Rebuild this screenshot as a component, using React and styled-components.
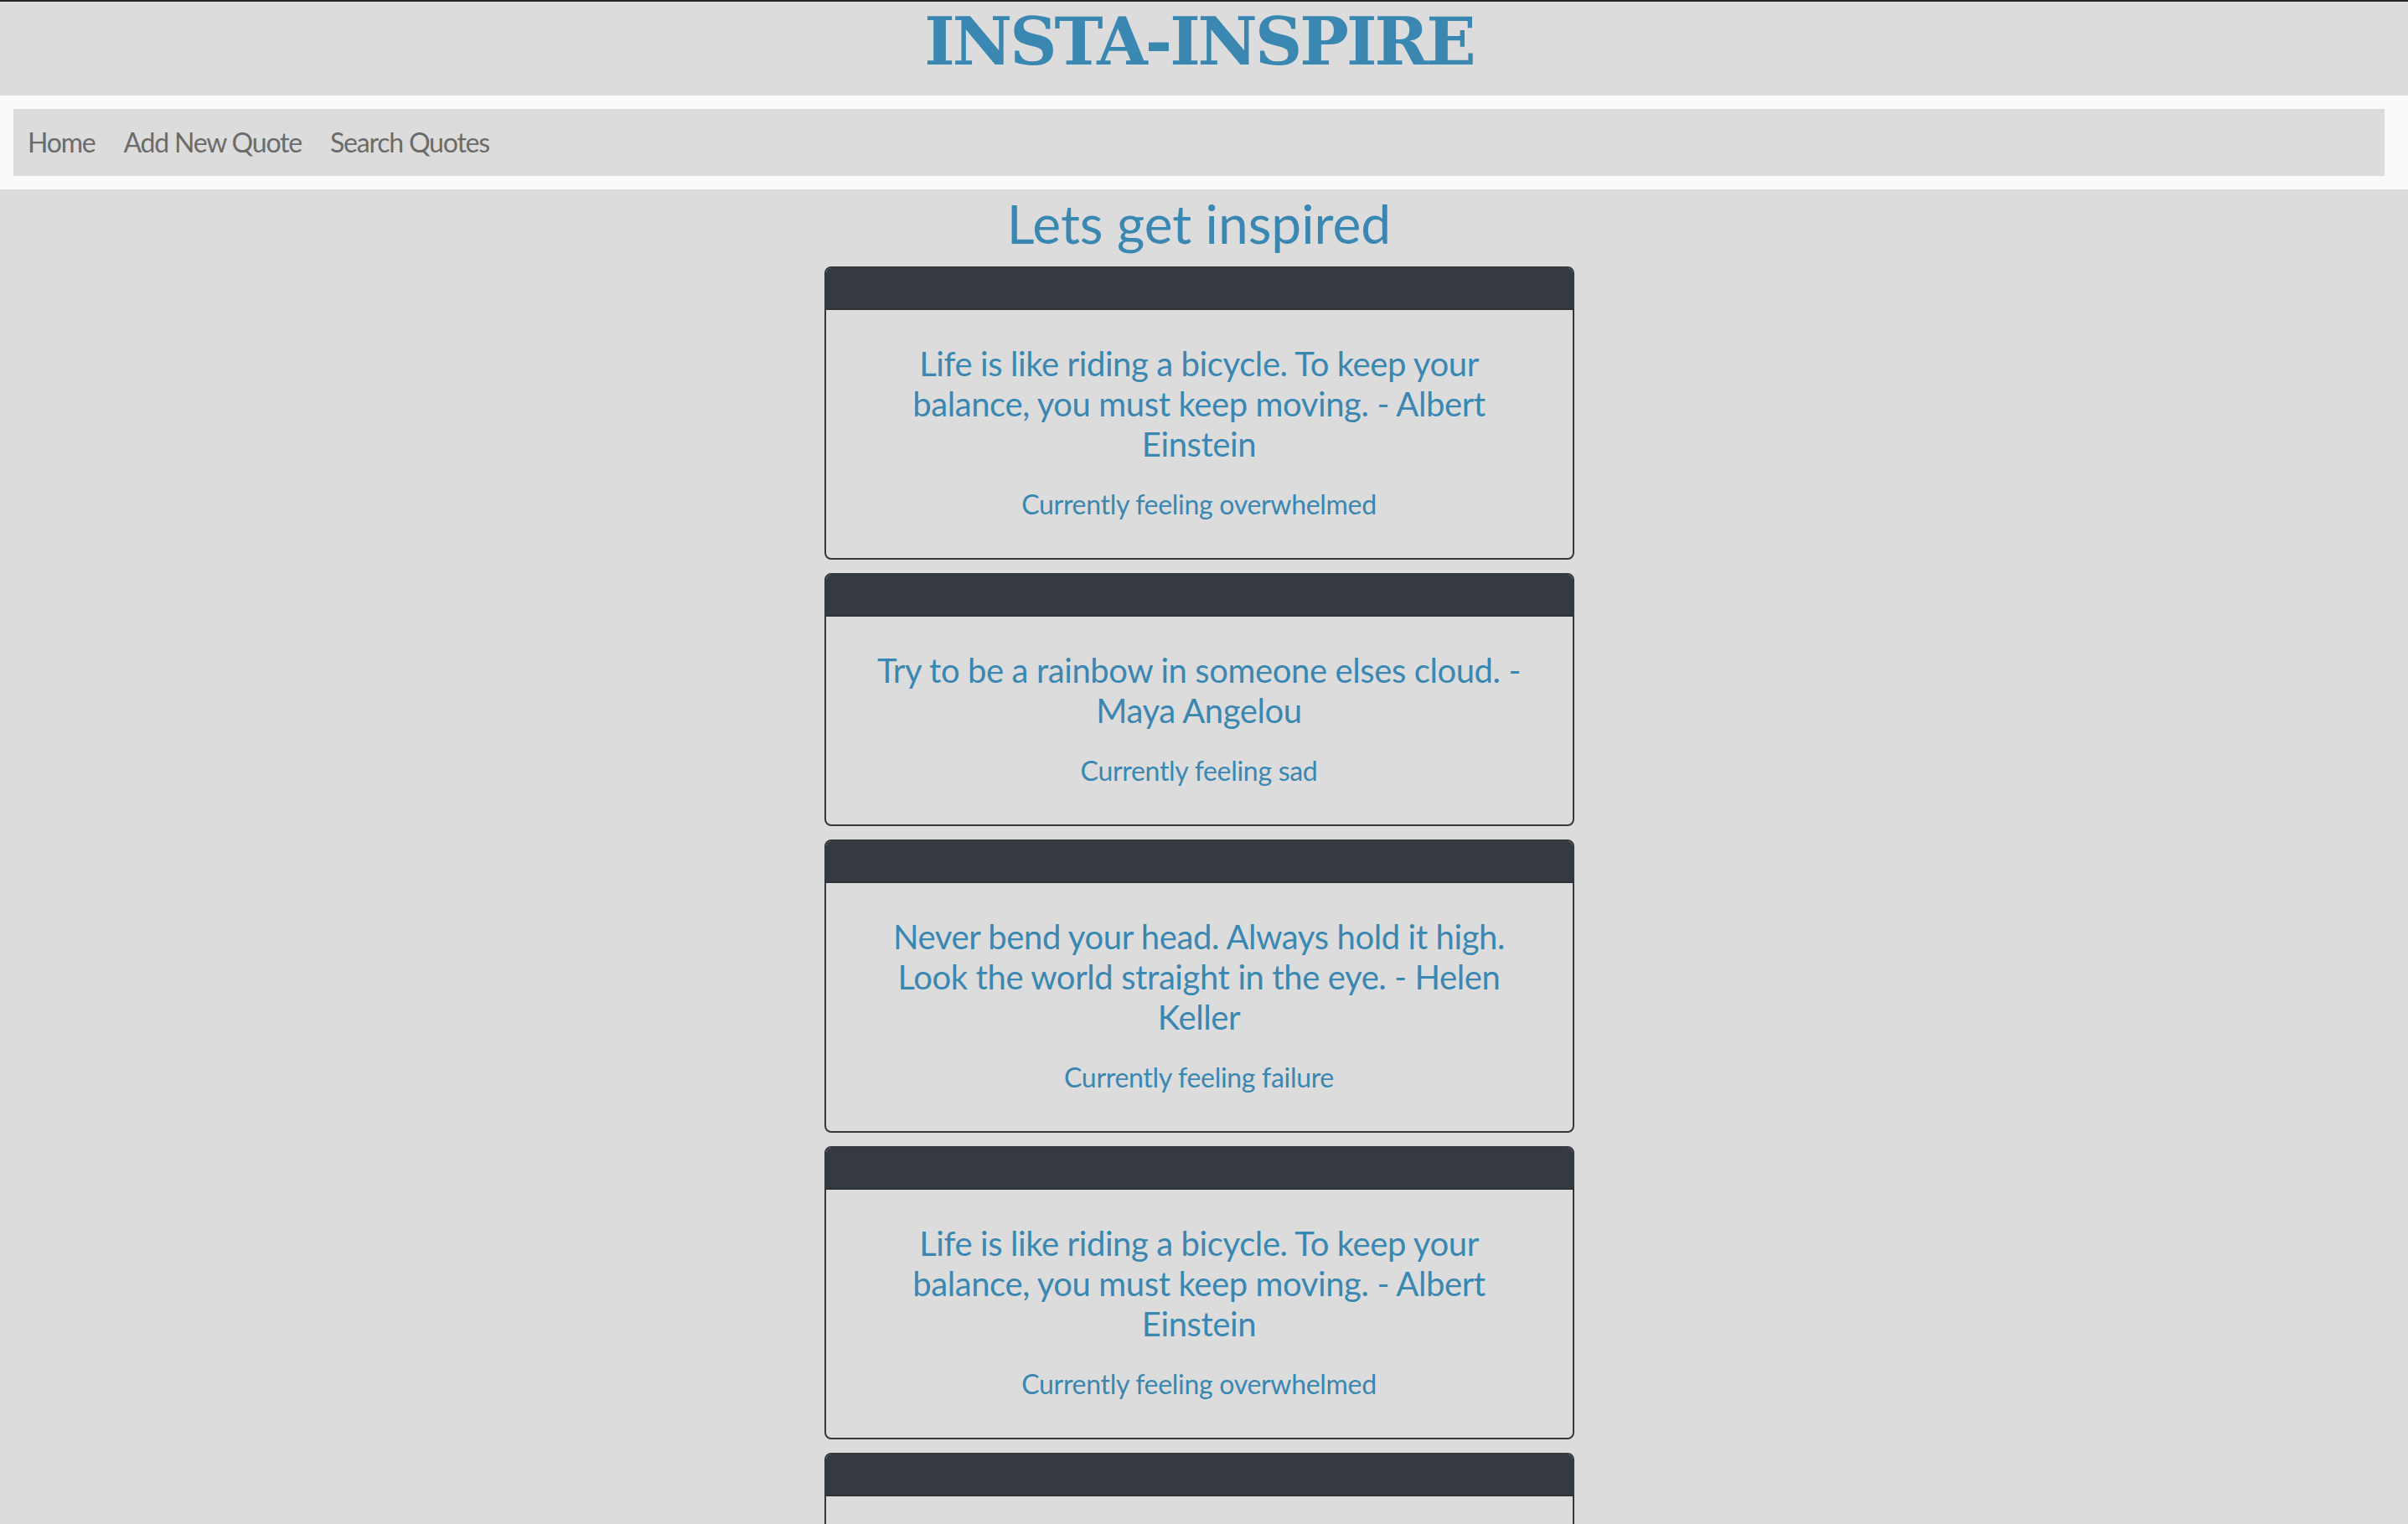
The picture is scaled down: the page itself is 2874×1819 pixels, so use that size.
import React from "react";
import styled, { createGlobalStyle } from "styled-components";

const quotes = [
  {
    text: "Life is like riding a bicycle. To keep your balance, you must keep moving. - Albert Einstein",
    mood: "overwhelmed",
  },
  {
    text: "Try to be a rainbow in someone elses cloud. - Maya Angelou",
    mood: "sad",
  },
  {
    text: "Never bend your head. Always hold it high. Look the world straight in the eye. - Helen Keller",
    mood: "failure",
  },
  {
    text: "Life is like riding a bicycle. To keep your balance, you must keep moving. - Albert Einstein",
    mood: "overwhelmed",
  },
  {
    text: "Try to be a rainbow in someone elses cloud. - Maya Angelou",
    mood: "sad",
  },
];

const GlobalStyle = createGlobalStyle`
  html, body {
    margin: 0;
    padding: 0;
    background: #dcdcdc;
  }
  body {
    font-family: Lato, "Liberation Sans", sans-serif;
  }
`;

const App = () => {
  return (
    <Page>
      <GlobalStyle />
      <Masthead>
        <Title>INSTA-INSPIRE</Title>
      </Masthead>
      <NavShell>
        <NavBar>
          <NavLink href="#">Home</NavLink>
          <NavLink href="#">Add New Quote</NavLink>
          <NavLink href="#">Search Quotes</NavLink>
        </NavBar>
      </NavShell>
      <Main>
        <Heading>Lets get inspired</Heading>
        {quotes.map((q, index) => (
          <Card key={index}>
            <CardHeader />
            <CardBody>
              <Quote>{q.text}</Quote>
              <Mood>Currently feeling {q.mood}</Mood>
            </CardBody>
          </Card>
        ))}
      </Main>
    </Page>
  );
};

const Page = styled.div`
  border-top: 2px solid #252525;
  min-height: 100vh;
  background: #dcdcdc;
`;

const Masthead = styled.header`
  padding-right: 12px;
  text-align: center;
`;

const Title = styled.h1`
  margin: 0 0 16px;
  font-family: "DejaVu Serif", "Liberation Serif", serif;
  font-weight: 700;
  font-size: 78px;
  line-height: 96px;
  letter-spacing: -3px;
  color: #3a87b1;
`;

const NavShell = styled.nav`
  background: #f8f9fa;
  padding: 16px 28px 16px 16px;
`;

const NavBar = styled.div`
  display: flex;
  align-items: center;
  height: 80px;
  background: #dcdcdc;
`;

const NavLink = styled.a`
  padding: 16px 17px;
  font-size: 32px;
  line-height: 48px;
  letter-spacing: -1.2px;
  color: #6b6b6b;
  text-decoration: none;
`;

const Main = styled.main`
  display: flex;
  flex-direction: column;
  align-items: center;
  padding-right: 12px;
`;

const Heading = styled.h2`
  margin: 2px 0 13px;
  font-size: 64px;
  font-weight: 400;
  line-height: 77px;
  color: #3a87b1;
`;

const Card = styled.div`
  width: 895px;
  box-sizing: border-box;
  margin-bottom: 16px;
  border: 2px solid #33383d;
  border-radius: 8px;
  overflow: hidden;
`;

const CardHeader = styled.div`
  height: 48px;
  background: #343a40;
  border-bottom: 2px solid #2d3237;
`;

const CardBody = styled.div`
  padding: 40px;
  text-align: center;
  color: #3a87b1;
`;

const Quote = styled.h5`
  margin: 0 0 24px;
  font-size: 40px;
  font-weight: 400;
  line-height: 48px;
  letter-spacing: -0.4px;
`;

const Mood = styled.p`
  margin: 0;
  font-size: 32px;
  line-height: 48px;
  letter-spacing: -0.3px;
`;

export default App;
